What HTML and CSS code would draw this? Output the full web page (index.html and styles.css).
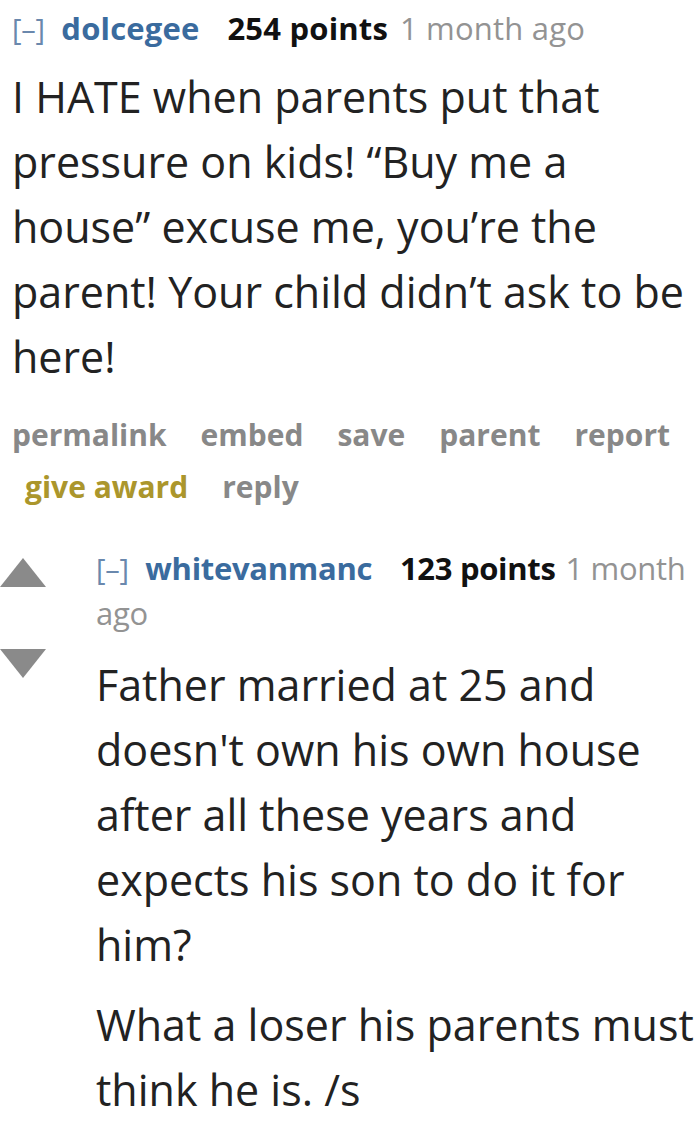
FILE: index.html
```html
<!DOCTYPE html>
<html>
<head>
<meta charset="utf-8">
<link rel="stylesheet" href="styles.css">
</head>
<body>
<div class="comment first">
  <div class="tagline">
    <span class="expand">[–]</span>
    <span class="author">dolcegee</span>
    <span class="score">254 points</span>
    <span class="time">1 month ago</span>
  </div>
  <div class="md">
    <p>I HATE when parents put that pressure on kids! “Buy me a house” excuse me, you’re the parent! Your child didn’t ask to be here!</p>
  </div>
  <ul class="buttons">
    <li>permalink</li>
    <li>embed</li>
    <li>save</li>
    <li>parent</li>
    <li>report</li>
    <li class="award">give award</li>
    <li>reply</li>
  </ul>
</div>
<div class="comment child">
  <div class="votes">
    <div class="arrow up"></div>
    <div class="arrow down"></div>
  </div>
  <div class="entry">
    <div class="tagline">
      <span class="expand">[–]</span>
      <span class="author">whitevanmanc</span>
      <span class="score">123 points</span>
      <span class="time">1 month</span>
      <span class="time">ago</span>
    </div>
    <div class="md">
      <p>Father married at 25 and doesn't own his own house after all these years and expects his son to do it for him?</p>
      <p>What a loser his parents must think he is. /s</p>
    </div>
  </div>
</div>
</body>
</html>
```
FILE: styles.css
```css
html, body {
  margin: 0;
  padding: 0;
  background: #ffffff;
}
body {
  width: 700px;
  overflow: hidden;
  font-family: "Open Sans", "Noto Sans", sans-serif;
}
.comment.first {
  padding: 6px 0 0 12px;
  width: 682px;
}
.tagline {
  font-size: 31px;
  line-height: 44px;
  color: #888888;
  letter-spacing: -0.3px;
}
.first .tagline .author,
.first .tagline .score,
.first .tagline .time {
  letter-spacing: 0.2px;
}
.expand {
  color: #6a88ad;
  font-size: 29px;
  margin-right: 9px;
}
.author {
  color: #3a6b9e;
  font-weight: 700;
  margin-right: 20px;
}
.score {
  color: #111111;
  font-weight: 700;
  margin-right: 2px;
}
.first .score {
  margin-right: 4px;
}
.time {
  color: #939393;
}
.md {
  font-size: 43px;
  line-height: 65px;
  color: #222222;
}
.md p {
  margin: 0;
}
.first .md {
  margin-top: 13px;
}
.child .md p + p {
  margin-top: 15px;
}
.buttons {
  list-style: none;
  margin: 22px 0 0 0;
  padding: 0;
  display: flex;
  flex-wrap: wrap;
  column-gap: 34px;
  row-gap: 4px;
  font-size: 30px;
  line-height: 48px;
  font-weight: 700;
  color: #888888;
  letter-spacing: 0;
}
.buttons .award {
  color: #ab962c;
  margin-left: 13px;
}
.comment.child {
  display: flex;
  margin-top: 35px;
}
.votes {
  width: 96px;
  flex: none;
  display: flex;
  flex-direction: column;
  gap: 62px;
  padding-top: 12px;
}
.arrow {
  width: 0;
  height: 0;
  border-left: 23px solid transparent;
  border-right: 23px solid transparent;
}
.arrow.up {
  border-bottom: 29px solid #8a8a8a;
}
.arrow.down {
  border-top: 29px solid #8a8a8a;
}
.entry {
  width: 598px;
  flex: none;
}
.child .md {
  margin-top: 17px;
}
```
